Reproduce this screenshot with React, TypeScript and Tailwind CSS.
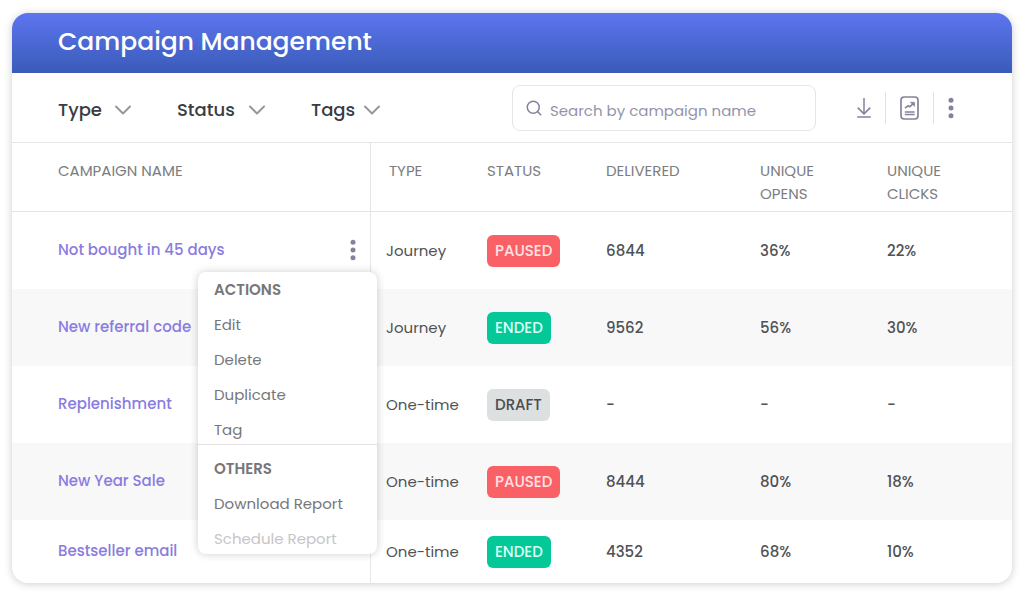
import { ChevronDown, Search } from "lucide-react";

type Status = "PAUSED" | "ENDED" | "DRAFT";

interface Campaign {
  name: string;
  type: string;
  status: Status;
  delivered: string;
  opens: string;
  clicks: string;
  height: string;
}

const campaigns: Campaign[] = [
  { name: "Not bought in 45 days", type: "Journey", status: "PAUSED", delivered: "6844", opens: "36%", clicks: "22%", height: "h-[77px]" },
  { name: "New referral code", type: "Journey", status: "ENDED", delivered: "9562", opens: "56%", clicks: "30%", height: "h-[77px]" },
  { name: "Replenishment", type: "One-time", status: "DRAFT", delivered: "-", opens: "-", clicks: "-", height: "h-[77px]" },
  { name: "New Year Sale", type: "One-time", status: "PAUSED", delivered: "8444", opens: "80%", clicks: "18%", height: "h-[77px]" },
  { name: "Bestseller email", type: "One-time", status: "ENDED", delivered: "4352", opens: "68%", clicks: "10%", height: "h-[63px]" },
];

const statusStyles: Record<Status, string> = {
  PAUSED: "bg-[#f96167] text-[#ffe3e4]",
  ENDED: "bg-[#05c898] text-[#dcfff5]",
  DRAFT: "bg-[#dde0e1] text-[#4a4d52]",
};

const filters = [
  { label: "Type", width: "w-[73px]" },
  { label: "Status", width: "w-[88px]" },
  { label: "Tags", width: "w-[69px]" },
];

function Kebab() {
  return (
    <svg width="6" height="22" viewBox="0 0 6 22" fill="#85839c" aria-hidden="true">
      <circle cx="3" cy="3.3" r="2.5" />
      <circle cx="3" cy="11" r="2.5" />
      <circle cx="3" cy="18.7" r="2.5" />
    </svg>
  );
}

function DownloadIcon() {
  return (
    <svg width="16" height="22" viewBox="0 0 16 22" fill="none" stroke="#85839c" strokeWidth="1.5" aria-hidden="true">
      <path d="M8 1v15.8M1.7 10.6 8 16.9l6.3-6.3M1.2 20h13.6" />
    </svg>
  );
}

function ReportIcon() {
  return (
    <svg width="19" height="24" viewBox="0 0 19 24" fill="none" stroke="#85839c" aria-hidden="true">
      <rect x="1" y="1" width="17" height="22" rx="3.2" strokeWidth="1.7" />
      <path d="M5 12.2 8.2 9.8l1.7 0.9 3.6-3.6" strokeWidth="1.6" />
      <path d="M10.3 6.2h4.3v4.2z" fill="#85839c" strokeWidth="0.5" />
      <path d="M4.8 16h9.8M4.8 18.5h9.8" strokeWidth="1.6" />
    </svg>
  );
}

function Filter({ label, width }: { label: string; width: string }) {
  return (
    <div className={`relative flex items-center ${width}`}>
      <select
        aria-label={label}
        className="w-full appearance-none bg-transparent text-lg leading-7 font-medium text-[#3a3c43] outline-none"
      >
        <option>{label}</option>
      </select>
      <ChevronDown
        className="pointer-events-none absolute -right-1.5 size-7 text-[#96969c]"
        strokeWidth={1.7}
        aria-hidden="true"
      />
    </div>
  );
}

function MenuItem({ label, disabled }: { label: string; disabled?: boolean }) {
  return (
    <button
      type="button"
      role="menuitem"
      disabled={disabled}
      className="text-left text-[15px] leading-6 text-[#76777a] disabled:text-[#c5c6c8]"
    >
      {label}
    </button>
  );
}

function ActionsMenu() {
  return (
    <div
      role="menu"
      aria-label="Campaign actions"
      className="absolute top-[33px] -right-[21px] z-10 w-[179px] rounded-lg bg-white shadow-[0_0_8px_rgba(0,0,0,0.2)]"
    >
      <div className="flex flex-col gap-[11px] border-b border-[#e2e2e4] px-4 pt-[6px] pb-[2px]">
        <div className="text-[15px] leading-6 font-semibold text-[#76777a]">ACTIONS</div>
        <MenuItem label="Edit" />
        <MenuItem label="Delete" />
        <MenuItem label="Duplicate" />
        <MenuItem label="Tag" />
      </div>
      <div className="flex flex-col gap-[11px] px-4 pt-[12px] pb-[3px]">
        <div className="text-[15px] leading-6 font-semibold text-[#76777a]">OTHERS</div>
        <MenuItem label="Download Report" />
        <MenuItem label="Schedule Report" disabled />
      </div>
    </div>
  );
}

const headCell = "pt-4 pb-[6px] text-left align-top font-normal";

export default function App() {
  return (
    <div className="bg-white px-3 py-[13px] font-[Poppins,Inter,sans-serif] antialiased">
      <main className="rounded-2xl bg-white shadow-[0_1px_9px_rgba(0,0,0,0.2)]">
        <header className="flex h-[60px] items-center rounded-t-2xl bg-linear-to-b from-[#5d75f0] to-[#3a5bb8] px-[46px] pb-[2px]">
          <h1 className="text-[25px] leading-8 font-medium text-white">Campaign Management</h1>
        </header>

        <div className="flex h-[70px] items-center border-b border-[#e6e6e8] pr-[58px] pl-[46px]">
          <div className="flex gap-[46px] pt-1">
            {filters.map((f) => (
              <Filter key={f.label} label={f.label} width={f.width} />
            ))}
          </div>
          <label className="ml-auto flex h-[46px] w-[304px] items-center gap-[7px] rounded-lg border border-[#e6e6ea] px-3">
            <Search className="size-[18px] shrink-0 text-[#85839c]" strokeWidth={2} aria-hidden="true" />
            <input
              type="text"
              aria-label="Search by campaign name"
              placeholder="Search by campaign name"
              className="w-full min-w-0 pt-1.5 text-[15px] leading-6 outline-none placeholder:text-[#9493aa]"
            />
          </label>
          <div className="ml-10 flex items-center">
            <button type="button" aria-label="Download">
              <DownloadIcon />
            </button>
            <div className="ml-[13px] h-8 w-px bg-[#e3e3e6]" />
            <button type="button" aria-label="Reports" className="mx-[14px]">
              <ReportIcon />
            </button>
            <div className="h-8 w-px bg-[#e3e3e6]" />
            <button type="button" aria-label="More options" className="ml-[14px]">
              <Kebab />
            </button>
          </div>
        </div>

        <table className="w-full table-fixed border-separate border-spacing-0">
          <colgroup>
            <col />
            <col className="w-[117px]" />
            <col className="w-[119px]" />
            <col className="w-[154px]" />
            <col className="w-[127px]" />
            <col className="w-[125px]" />
          </colgroup>
          <thead>
            <tr className="text-[15px] leading-[23px] text-[#7c7d80] *:border-b *:border-[#e4e4e6]">
              <th scope="col" className={`${headCell} pl-[46px]`}>CAMPAIGN NAME</th>
              <th scope="col" className={`${headCell} border-l pl-[18px]`}>TYPE</th>
              <th scope="col" className={headCell}>STATUS</th>
              <th scope="col" className={headCell}>DELIVERED</th>
              <th scope="col" className={headCell}>
                UNIQUE
                <br />
                OPENS
              </th>
              <th scope="col" className={headCell}>
                UNIQUE
                <br />
                CLICKS
              </th>
            </tr>
          </thead>
          <tbody>
            {campaigns.map((c, i) => (
              <tr
                key={c.name}
                className="text-[15px] leading-6 text-[#505256] even:bg-[#f8f8f9] last:*:first:rounded-bl-2xl last:*:last:rounded-br-2xl"
              >
                <td className={`${c.height} py-0 pr-[14px] pb-[2px] pl-[46px]`}>
                  <div className="flex items-center justify-between">
                    <a href="#" className="font-medium text-[#8a7ce0]">
                      {c.name}
                    </a>
                    {i === 0 && (
                      <div className="relative flex">
                        <button type="button" aria-label="Campaign actions" aria-haspopup="menu" aria-expanded="true">
                          <Kebab />
                        </button>
                        <ActionsMenu />
                      </div>
                    )}
                  </div>
                </td>
                <td className="border-l border-[#e6e6e8] pl-[15px]">{c.type}</td>
                <td>
                  <span
                    className={`inline-flex h-8 items-center rounded-md px-2 align-middle font-medium ${statusStyles[c.status]}`}
                  >
                    {c.status}
                  </span>
                </td>
                <td className="font-medium">{c.delivered}</td>
                <td className="font-medium">{c.opens}</td>
                <td className="font-medium">{c.clicks}</td>
              </tr>
            ))}
          </tbody>
        </table>
      </main>
    </div>
  );
}
